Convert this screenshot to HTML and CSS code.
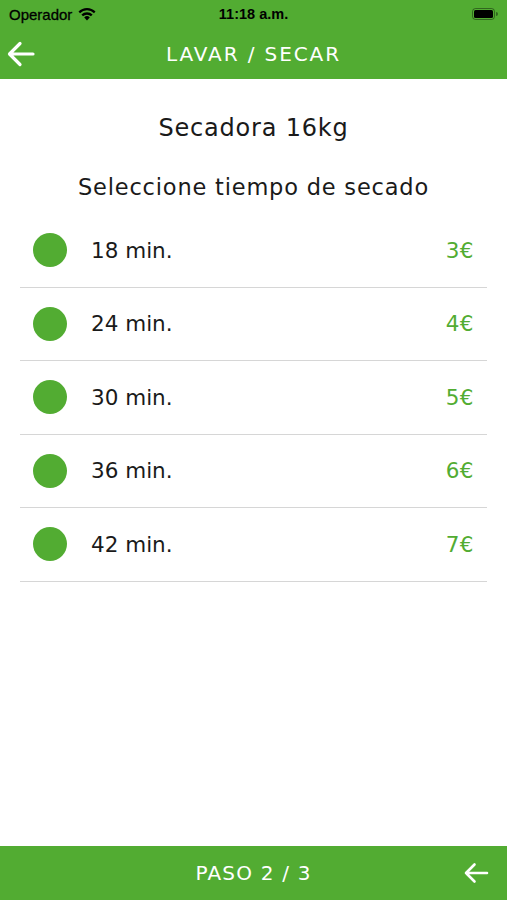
FILE: index.html
```html
<!DOCTYPE html>
<html lang="es">
<head>
    <meta charset="UTF-8">
    <meta name="viewport" content="width=device-width, initial-scale=1.0">
    <title>Lavar / Secar</title>
    <link rel="stylesheet" href="styles.css">
</head>
<body>
    <div class="app">
        <div class="top">
            <div class="status-bar">
                <div class="carrier">
                    Operador
                    <svg class="wifi" width="18" height="13" viewBox="0 0 18 13">
                        <path d="M9 12.5 L6.2 9.4 A4 4 0 0 1 11.8 9.4 Z" fill="#000"/>
                        <path d="M3.4 6.6 A8 8 0 0 1 14.6 6.6 L13 8.3 A5.7 5.7 0 0 0 5 8.3 Z" fill="#000"/>
                        <path d="M0.5 3.6 A12 12 0 0 1 17.5 3.6 L16 5.2 A9.8 9.8 0 0 0 2 5.2 Z" fill="#000"/>
                    </svg>
                </div>
                <div class="clock">11:18 a.m.</div>
                <div class="battery">
                    <svg width="26" height="12" viewBox="0 0 26 12">
                        <rect x="0.5" y="0.5" width="22" height="11" rx="3" fill="none" stroke="#000" stroke-opacity="0.4"/>
                        <rect x="2" y="2" width="19" height="8" rx="1.5" fill="#000"/>
                        <path d="M24 4 v4 a2 2 0 0 0 0 -4z" fill="#000" fill-opacity="0.4"/>
                    </svg>
                </div>
            </div>
            <div class="nav-bar">
                <svg class="arrow nav-back" width="28" height="26" viewBox="0 0 28 26">
                    <path d="M26 13 H3 M13 2.5 L2.5 13 L13 23.5" fill="none" stroke="#fff" stroke-width="3.2" stroke-linecap="round" stroke-linejoin="round"/>
                </svg>
                <div class="nav-title">LAVAR / SECAR</div>
            </div>
        </div>

        <div class="content">
            <h1 class="machine">Secadora 16kg</h1>
            <p class="prompt">Seleccione tiempo de secado</p>

            <ul class="options" id="options"></ul>
        </div>

        <div class="footer">
            <div class="step">PASO 2 / 3</div>
            <svg class="arrow footer-arrow" width="26" height="22" viewBox="0 0 26 22">
                <path d="M24 11 H3 M11.5 2.5 L3 11 L11.5 19.5" fill="none" stroke="#fff" stroke-width="2.6" stroke-linecap="round" stroke-linejoin="round"/>
            </svg>
        </div>
    </div>

    <script>
        // Drying time options
        var options = [
            { minutes: 18, price: 3 },
            { minutes: 24, price: 4 },
            { minutes: 30, price: 5 },
            { minutes: 36, price: 6 },
            { minutes: 42, price: 7 }
        ];

        document.getElementById('options').innerHTML = options.map(o => `
            <li class="option">
                <span class="dot"></span>
                <span class="time">${o.minutes} min.</span>
                <span class="price">${o.price}€</span>
            </li>
        `).join('');
    </script>
</body>
</html>
```
FILE: styles.css
```css
:root {
    --green: #52ac32;
    --text: #1a1a1a;
    --divider: #d6d6d6;
}

body {
    margin: 0;
    font-family: 'DejaVu Sans', 'Open Sans', sans-serif;
    background: #fff;
}

.app {
    height: 900px;
    display: flex;
    flex-direction: column;
}

.top {
    background: var(--green);
    height: 79px;
}

.status-bar {
    height: 28px;
    display: flex;
    align-items: center;
    justify-content: space-between;
    padding: 0 9px;
    font-family: 'Liberation Sans', sans-serif;
    font-weight: bold;
    font-size: 14px;
    color: #000;
    position: relative;
}

.carrier {
    display: flex;
    align-items: center;
    gap: 6px;
    font-size: 15px;
    font-weight: normal;
    -webkit-text-stroke: 0.3px #000;
}

.clock {
    position: absolute;
    left: 0;
    right: 0;
    text-align: center;
    font-size: 14.5px;
    pointer-events: none;
}

.battery svg {
    display: block;
}

.nav-bar {
    height: 51px;
    display: flex;
    align-items: center;
    position: relative;
}

.nav-back {
    margin-left: 7px;
}

.nav-title {
    position: absolute;
    left: 0;
    right: 0;
    text-align: center;
    color: #fff;
    font-size: 20px;
    letter-spacing: 1.9px;
}

.content {
    flex: 1;
}

.machine {
    margin: 34px 0 0;
    text-align: center;
    font-weight: normal;
    font-size: 24px;
    letter-spacing: 0.8px;
    color: var(--text);
    line-height: 30px;
}

.prompt {
    margin: 29px 0 0;
    text-align: center;
    font-size: 22.5px;
    letter-spacing: 0.8px;
    color: var(--text);
    line-height: 30px;
}

.options {
    list-style: none;
    margin: 12px 20px 0;
    padding: 0;
}

.option {
    height: 72.5px;
    display: flex;
    align-items: center;
    border-bottom: 1.5px solid var(--divider);
}

.dot {
    width: 34px;
    height: 34px;
    border-radius: 50%;
    background: var(--green);
    margin-left: 13px;
}

.time {
    margin-left: 24px;
    font-size: 21.5px;
    color: var(--text);
}

.price {
    margin-left: auto;
    margin-right: 13px;
    font-size: 21.5px;
    letter-spacing: 0.5px;
    color: var(--green);
}

.footer {
    background: var(--green);
    height: 54px;
    display: flex;
    align-items: center;
    justify-content: flex-end;
    position: relative;
}

.step {
    position: absolute;
    left: 0;
    right: 0;
    text-align: center;
    color: #fff;
    font-size: 20px;
    letter-spacing: 1.2px;
}

.footer-arrow {
    margin-right: 18px;
}
```
